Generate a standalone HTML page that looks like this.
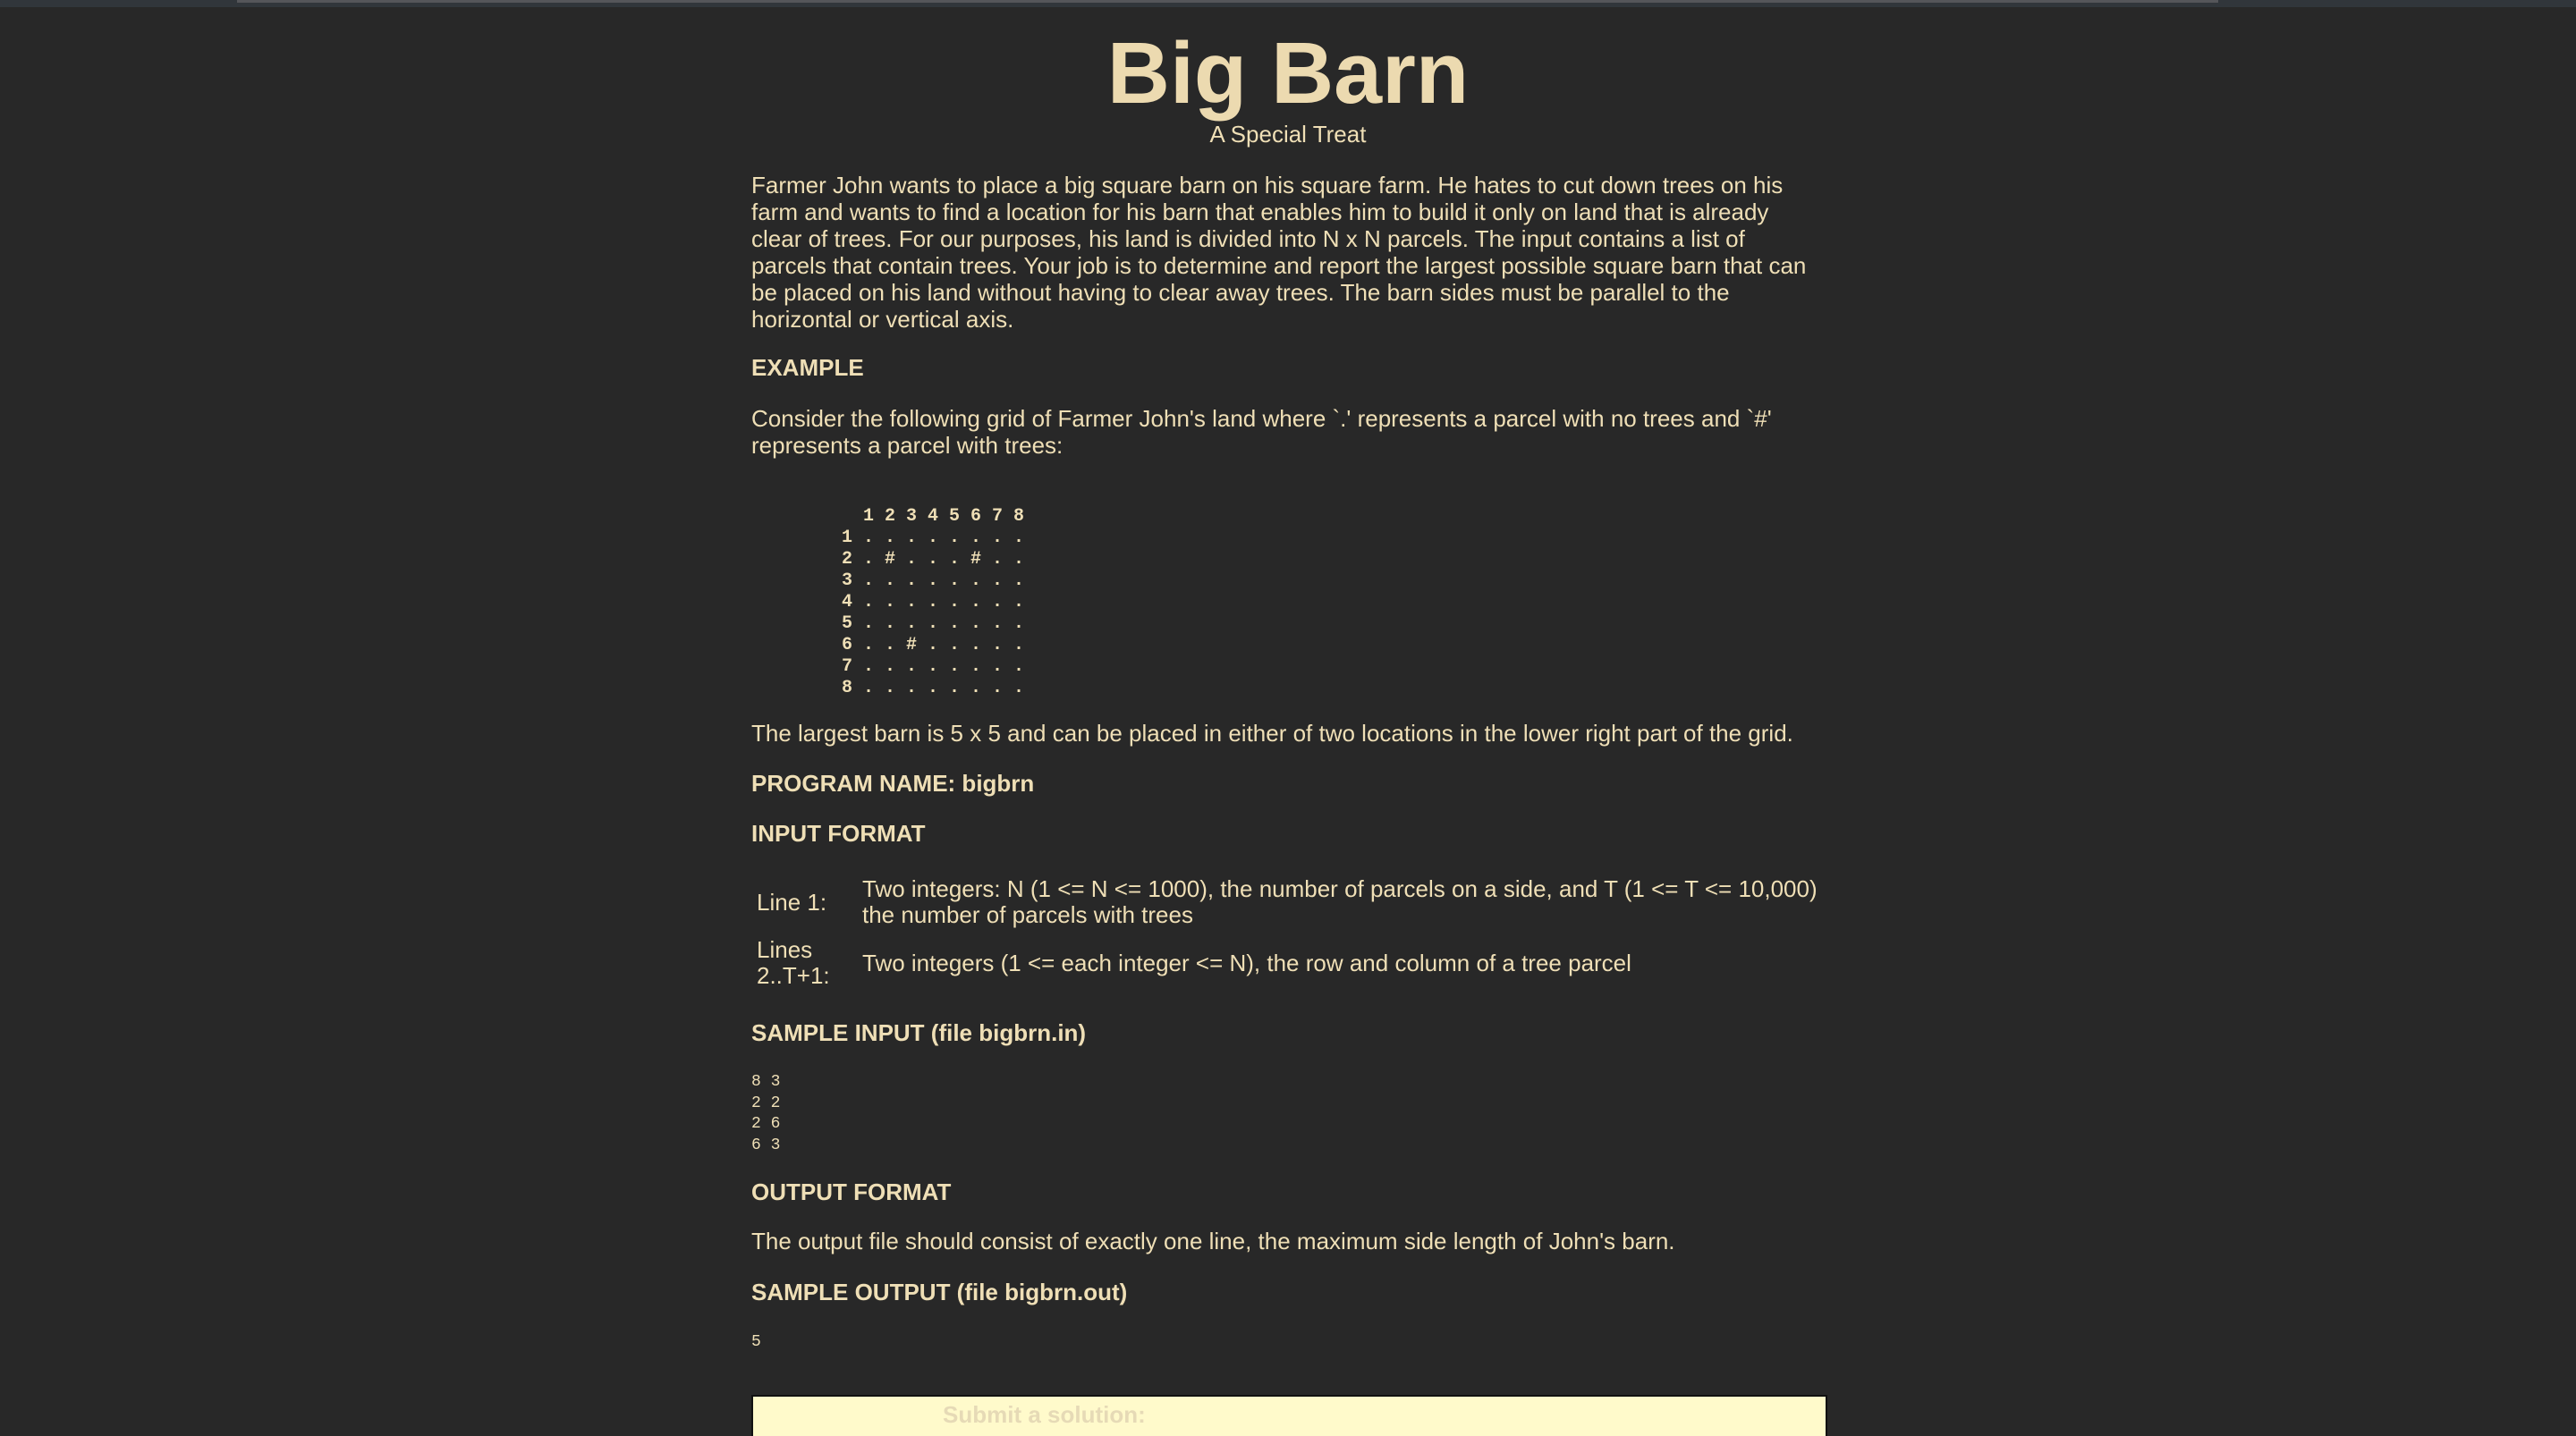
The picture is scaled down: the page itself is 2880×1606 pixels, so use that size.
<!DOCTYPE html>
<html><head><meta charset="utf-8"><style>
html,body{margin:0;padding:0;background:#282828;width:2880px;height:1606px;overflow:hidden;position:relative}
body{font-family:"Liberation Sans",Arial,sans-serif;color:#efdfb6;font-size:26px}
.a{position:absolute;white-space:nowrap}
.l{position:absolute;left:840px;line-height:30px}
b{font-weight:bold}
pre{margin:0;font-family:"Liberation Mono",monospace;position:absolute;left:840px;line-height:24px;font-size:19px;font-weight:bold}
</style></head><body>
<div style="position:absolute;left:0;top:0;width:2880px;height:8px;background:#31363b"></div>
<div style="position:absolute;left:265px;top:0;width:2215px;height:3px;background:#55565a"></div>
<div class="a" style="left:0;width:2880px;text-align:center;top:22px;font-size:97px;font-weight:bold;line-height:120px;color:#ecdab0">Big Barn</div>
<div class="a" style="left:0;width:2880px;text-align:center;top:135px;line-height:30px">A Special Treat</div>
<div class="l" style="top:192px;width:1200px">Farmer John wants to place a big square barn on his square farm. He hates to cut down trees on his farm and wants to find a location for his barn that enables him to build it only on land that is already clear of trees. For our purposes, his land is divided into N x N parcels. The input contains a list of parcels that contain trees. Your job is to determine and report the largest possible square barn that can be placed on his land without having to clear away trees. The barn sides must be parallel to the horizontal or vertical axis.</div>
<div class="a" style="left:840px;top:396px;line-height:30px"><b>EXAMPLE</b></div>
<div class="l" style="top:453px;width:1200px">Consider the following grid of Farmer John's land where `.' represents a parcel with no trees and `#' represents a parcel with trees:</div>
<pre style="top:566px;left:845px;font-size:20px">          1 2 3 4 5 6 7 8
        1 . . . . . . . .
        2 . # . . . # . .
        3 . . . . . . . .
        4 . . . . . . . .
        5 . . . . . . . .
        6 . . # . . . . .
        7 . . . . . . . .
        8 . . . . . . . .</pre>
<div class="a" style="left:840px;top:805px;line-height:30px">The largest barn is 5 x 5 and can be placed in either of two locations in the lower right part of the grid.</div>
<div class="a" style="left:840px;top:861px;line-height:30px"><b>PROGRAM NAME: bigbrn</b></div>
<div class="a" style="left:840px;top:917px;line-height:30px"><b>INPUT FORMAT</b></div>
<div class="a" style="left:846px;top:994px;line-height:30px">Line 1:</div>
<div class="a" style="left:964px;top:980px;line-height:29px">Two integers: N (1 &lt;= N &lt;= 1000), the number of parcels on a side, and T (1 &lt;= T &lt;= 10,000)<br>the number of parcels with trees</div>
<div class="a" style="left:846px;top:1048px;line-height:29px">Lines<br>2..T+1:</div>
<div class="a" style="left:964px;top:1062px;line-height:30px">Two integers (1 &lt;= each integer &lt;= N), the row and column of a tree parcel</div>
<div class="a" style="left:840px;top:1140px;line-height:30px"><b>SAMPLE INPUT (file bigbrn.in)</b></div>
<pre style="top:1199px;font-size:18px;line-height:23.7px;font-weight:normal">8 3
2 2
2 6
6 3</pre>
<div class="a" style="left:840px;top:1318px;line-height:30px"><b>OUTPUT FORMAT</b></div>
<div class="a" style="left:840px;top:1373px;line-height:30px">The output file should consist of exactly one line, the maximum side length of John's barn.</div>
<div class="a" style="left:840px;top:1430px;line-height:30px"><b>SAMPLE OUTPUT (file bigbrn.out)</b></div>
<pre style="top:1489px;font-size:18px;font-weight:normal">5</pre>
<div style="position:absolute;left:840px;top:1560px;width:1199px;height:60px;background:#fffacb;border:2px solid #111"></div>
<div class="a" style="left:1054px;top:1567px;line-height:30px;font-weight:bold;color:#e6dab6">Submit a solution:</div>
</body></html>
